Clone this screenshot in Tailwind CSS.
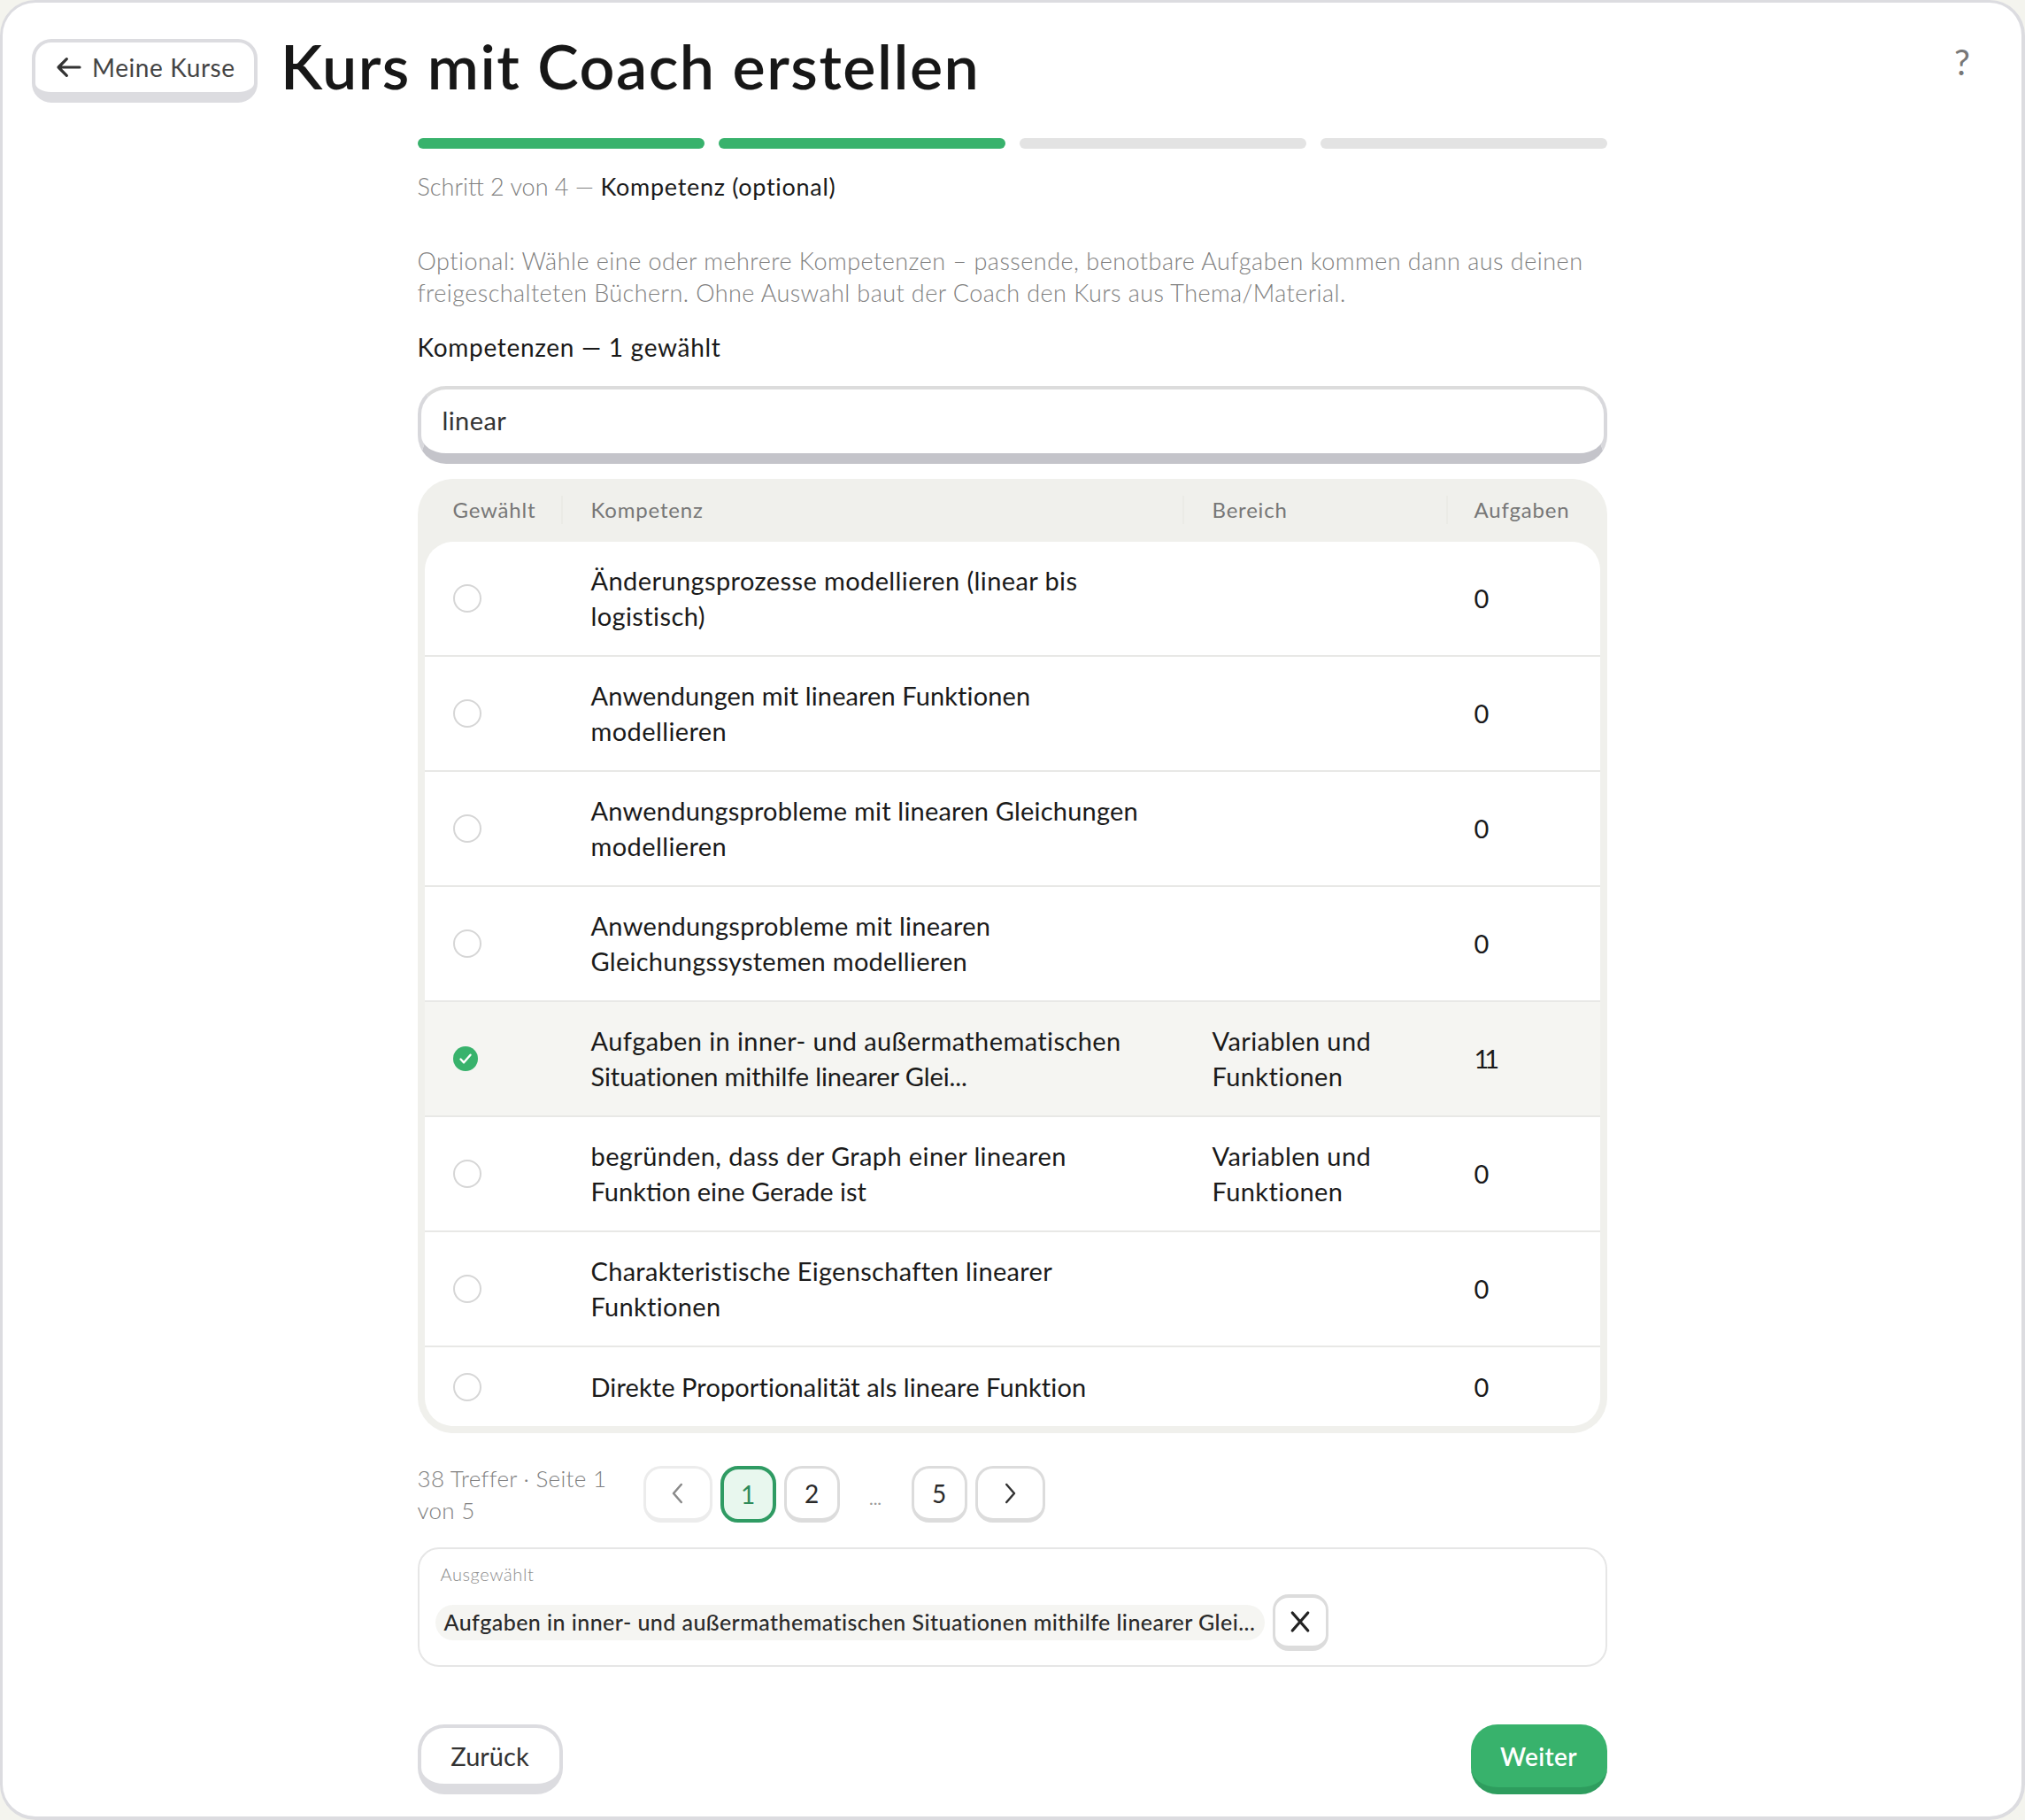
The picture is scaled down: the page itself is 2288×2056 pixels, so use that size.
<!DOCTYPE html>
<html lang="de">
<head>
    <meta charset="UTF-8">
    <title>Kurs mit Coach erstellen</title>
    <script src="https://cdn.jsdelivr.net/npm/@tailwindcss/browser@4"></script>
</head>
<body class="bg-[#f4f4ee] font-[Lato,sans-serif] text-[#1a1a1a]">

<div class="h-[2056px] w-[2288px] overflow-hidden rounded-[40px] border-l-[3px] border-r-[4px] border-t-[3px] border-b-[4px] border-[#dcdce0] bg-white">

    <!-- HEADER -->
    <header class="flex h-[113px] items-start pl-[33px] pr-[58px] pt-[41px]">
        <button class="flex h-[72px] w-[255px] items-center gap-[10px] rounded-[22px] border-x-[4px] border-t-[4px] border-b-[12px] border-[#dcdce0] bg-white pl-[22px] text-[28px] tracking-[0.6px] text-[#444]">
            <svg class="h-[32px] w-[32px]" viewBox="0 0 24 24" fill="none" stroke="#333" stroke-width="2.4" stroke-linecap="round" stroke-linejoin="round"><path d="M21 12H3M10 5l-7 7 7 7"/></svg>
            <span>Meine Kurse</span>
        </button>
        <h1 class="ml-[26px] -mt-[6px] text-[70px] leading-[72px] font-semibold tracking-[1.5px] text-[#171717]">Kurs mit Coach erstellen</h1>
        <span class="ml-auto mt-[1px] text-[40px] leading-[50px] text-[#777]">?</span>
    </header>

    <!-- MAIN CONTENT -->
    <main class="mx-auto w-[1344px]">
        <div class="mt-[40px] flex gap-[16px]">
            <div class="h-[12px] flex-1 rounded-full bg-[#38b26c]"></div>
            <div class="h-[12px] flex-1 rounded-full bg-[#38b26c]"></div>
            <div class="h-[12px] flex-1 rounded-full bg-[#e3e3e3]"></div>
            <div class="h-[12px] flex-1 rounded-full bg-[#e3e3e3]"></div>
        </div>

        <p class="mt-[25px] text-[27px] leading-[36px] text-[#808080] font-light">Schritt 2 von 4 — <span class="font-normal tracking-[0.7px] text-[#1a1a1a]">Kompetenz (optional)</span></p>

        <p class="mt-[48px] text-[27px] leading-[36px] tracking-[0.48px] whitespace-nowrap text-[#808080] font-light">Optional: Wähle eine oder mehrere Kompetenzen – passende, benotbare Aufgaben kommen dann aus deinen<br><span class="tracking-[0.42px]">freigeschalteten Büchern. Ohne Auswahl baut der Coach den Kurs aus Thema/Material.</span></p>

        <p class="mt-[25px] text-[28px] leading-[36px] tracking-[0.7px] text-[#1a1a1a]">Kompetenzen — 1 gewählt</p>

        <div class="mt-[26px] flex h-[88px] items-start rounded-[32px] border-x-[4px] border-t-[4px] border-b-[12px] border-x-[#d8d8dc] border-t-[#dcdcdc] border-b-[#c4c4ca] bg-white pl-[24px] pt-[15px] text-[29px] leading-[40px] tracking-[0.4px] text-[#333]">linear</div>

        <!-- TABLE -->
        <div class="mt-[17px] rounded-[40px] bg-[#f0f0ec] px-[8px] pb-[8px]">
            <div class="grid h-[71px] grid-cols-[154px_702px_298px_174px] items-center pb-[2px] text-[24px] tracking-[0.8px] text-[#777]">
                <div class="pl-[32px]">Gewählt</div>
                <div class="flex h-[32px] items-center border-l-2 border-[#ebebe6] pl-[32px]">Kompetenz</div>
                <div class="flex h-[32px] items-center border-l-2 border-[#ebebe6] pl-[32px]">Bereich</div>
                <div class="flex h-[32px] items-center border-l-2 border-[#ebebe6] pl-[30px]">Aufgaben</div>
            </div>
            <div class="overflow-hidden rounded-[32px] bg-white text-[29px] leading-[40px] tracking-[0.4px]">

                <div class="grid h-[130px] grid-cols-[154px_702px_298px_174px] items-center border-b-2 border-[#e8e8e6]">
                    <div class="pl-[32px]"><div class="h-[32px] w-[32px] rounded-full border-2 border-[#d6d6d6]"></div></div>
                    <div class="pl-[34px] whitespace-nowrap">Änderungsprozesse modellieren (linear bis<br>logistisch)</div>
                    <div class="pl-[34px]"></div>
                    <div class="pl-[32px]">0</div>
                </div>

                <div class="grid h-[130px] grid-cols-[154px_702px_298px_174px] items-center border-b-2 border-[#e8e8e6]">
                    <div class="pl-[32px]"><div class="h-[32px] w-[32px] rounded-full border-2 border-[#d6d6d6]"></div></div>
                    <div class="pl-[34px] whitespace-nowrap"><span class="tracking-[0.1px]">Anwendungen mit linearen Funktionen</span><br>modellieren</div>
                    <div class="pl-[34px]"></div>
                    <div class="pl-[32px]">0</div>
                </div>

                <div class="grid h-[130px] grid-cols-[154px_702px_298px_174px] items-center border-b-2 border-[#e8e8e6]">
                    <div class="pl-[32px]"><div class="h-[32px] w-[32px] rounded-full border-2 border-[#d6d6d6]"></div></div>
                    <div class="pl-[34px] whitespace-nowrap"><span class="tracking-[0.2px]">Anwendungsprobleme mit linearen Gleichungen</span><br>modellieren</div>
                    <div class="pl-[34px]"></div>
                    <div class="pl-[32px]">0</div>
                </div>

                <div class="grid h-[130px] grid-cols-[154px_702px_298px_174px] items-center border-b-2 border-[#e8e8e6]">
                    <div class="pl-[32px]"><div class="h-[32px] w-[32px] rounded-full border-2 border-[#d6d6d6]"></div></div>
                    <div class="pl-[34px] whitespace-nowrap tracking-[0.27px]">Anwendungsprobleme mit linearen<br>Gleichungssystemen modellieren</div>
                    <div class="pl-[34px]"></div>
                    <div class="pl-[32px]">0</div>
                </div>

                <!-- selected row -->
                <div class="grid h-[130px] grid-cols-[154px_702px_298px_174px] items-center border-b-2 border-[#e8e8e6] bg-[#f5f5f2]">
                    <div class="pl-[32px]">
                        <svg class="h-[28px] w-[28px]" viewBox="0 0 28 28"><circle cx="14" cy="14" r="14" fill="#38b26c"/><path d="M8.5 14.5l3.6 3.8 7.4-8.6" fill="none" stroke="#fff" stroke-width="2.4" stroke-linecap="round" stroke-linejoin="round"/></svg>
                    </div>
                    <div class="pl-[34px] whitespace-nowrap">Aufgaben in inner- und außermathematischen<br><span class="tracking-[-0.1px]">Situationen mithilfe linearer Glei...</span></div>
                    <div class="pl-[34px] whitespace-nowrap">Variablen und<br>Funktionen</div>
                    <div class="pl-[32px] tracking-[-5px]">11</div>
                </div>

                <div class="grid h-[130px] grid-cols-[154px_702px_298px_174px] items-center border-b-2 border-[#e8e8e6]">
                    <div class="pl-[32px]"><div class="h-[32px] w-[32px] rounded-full border-2 border-[#d6d6d6]"></div></div>
                    <div class="pl-[34px] whitespace-nowrap">begründen, dass der Graph einer linearen<br><span class="tracking-[0px]">Funktion eine Gerade ist</span></div>
                    <div class="pl-[34px] whitespace-nowrap">Variablen und<br>Funktionen</div>
                    <div class="pl-[32px]">0</div>
                </div>

                <div class="grid h-[130px] grid-cols-[154px_702px_298px_174px] items-center border-b-2 border-[#e8e8e6]">
                    <div class="pl-[32px]"><div class="h-[32px] w-[32px] rounded-full border-2 border-[#d6d6d6]"></div></div>
                    <div class="pl-[34px] whitespace-nowrap tracking-[0.3px]">Charakteristische Eigenschaften linearer<br>Funktionen</div>
                    <div class="pl-[34px]"></div>
                    <div class="pl-[32px]">0</div>
                </div>

                <div class="grid h-[89px] grid-cols-[154px_702px_298px_174px] items-center">
                    <div class="pl-[32px]"><div class="h-[32px] w-[32px] rounded-full border-2 border-[#d6d6d6]"></div></div>
                    <div class="pl-[34px] whitespace-nowrap tracking-[0.1px]">Direkte Proportionalität als lineare Funktion</div>
                    <div class="pl-[34px]"></div>
                    <div class="pl-[32px]">0</div>
                </div>
            </div>
        </div>

        <!-- PAGINATION -->
        <div class="mt-[33px] flex items-start">
            <p class="w-[255px] text-[26px] leading-[36px] tracking-[0.3px] whitespace-nowrap text-[#808080] font-light">38 Treffer · Seite 1<br>von 5</p>
            <div class="mt-[4px] flex items-center gap-[9px] text-[28px] text-[#2a2a2a]">
                <button class="flex h-[64px] w-[78px] items-center justify-center rounded-[20px] border-x-[3px] border-t-[3px] border-b-[5px] border-[#ececec] bg-white">
                    <svg class="h-[30px] w-[30px]" viewBox="0 0 24 24" fill="none" stroke="#8a8a8a" stroke-width="2" stroke-linecap="round" stroke-linejoin="round"><path d="M15 4l-7 8 7 8"/></svg>
                </button>
                <button class="flex h-[64px] w-[63px] items-center justify-center rounded-[20px] border-[4px] border-[#2f9b63] bg-[#e8f7ee] text-[#2f8a5a]">1</button>
                <button class="flex h-[64px] w-[63px] items-center justify-center rounded-[20px] border-x-[3px] border-t-[3px] border-b-[5px] border-[#dcdcdc] bg-white">2</button>
                <span class="w-[63px] pt-[8px] text-center text-[20px] text-[#999]">...</span>
                <button class="flex h-[64px] w-[63px] items-center justify-center rounded-[20px] border-x-[3px] border-t-[3px] border-b-[5px] border-[#dcdcdc] bg-white">5</button>
                <button class="flex h-[64px] w-[79px] items-center justify-center rounded-[20px] border-x-[3px] border-t-[3px] border-b-[5px] border-[#dcdcdc] bg-white">
                    <svg class="h-[30px] w-[30px]" viewBox="0 0 24 24" fill="none" stroke="#333" stroke-width="2" stroke-linecap="round" stroke-linejoin="round"><path d="M9 4l7 8-7 8"/></svg>
                </button>
            </div>
        </div>

        <!-- SELECTED -->
        <div class="mt-[24px] h-[135px] rounded-[24px] border-2 border-[#e6e6e6] px-[18px] pt-[14px]">
            <p class="ml-[6px] text-[20px] leading-[28px] tracking-[0.6px] text-[#8c8c8c] font-light">Ausgewählt</p>
            <div class="mt-[9px] flex items-center gap-[9px]">
                <span class="flex h-[40px] w-[937px] items-center rounded-full bg-[#f5f5f2] pl-[10px] text-[25px] font-medium tracking-[0.44px] whitespace-nowrap text-[#2a2a2a]">Aufgaben in inner- und außermathematischen Situationen mithilfe linearer Glei...</span>
                <button class="flex h-[64px] w-[63px] items-center justify-center rounded-[18px] border-x-[3px] border-t-[4px] border-b-[6px] border-[#dcdcdc] bg-white">
                    <svg class="h-[30px] w-[30px]" viewBox="0 0 24 24" fill="none" stroke="#222" stroke-width="2.6" stroke-linecap="round"><path d="M5 4l14 16M19 4L5 20"/></svg>
                </button>
            </div>
        </div>

        <!-- FOOTER BUTTONS -->
        <div class="mt-[65px] flex justify-between">
            <button class="h-[79px] w-[164px] rounded-[30px] border-x-[4px] border-t-[4px] border-b-[12px] border-[#dcdce0] bg-white text-[29px] text-[#333]">Zurück</button>
            <button class="h-[79px] w-[154px] rounded-[30px] border-b-[8px] border-[#2e9d5e] bg-[#38b26c] text-[28px] font-semibold tracking-[0.4px] text-white">Weiter</button>
        </div>
    </main>
</div>

</body>
</html>
